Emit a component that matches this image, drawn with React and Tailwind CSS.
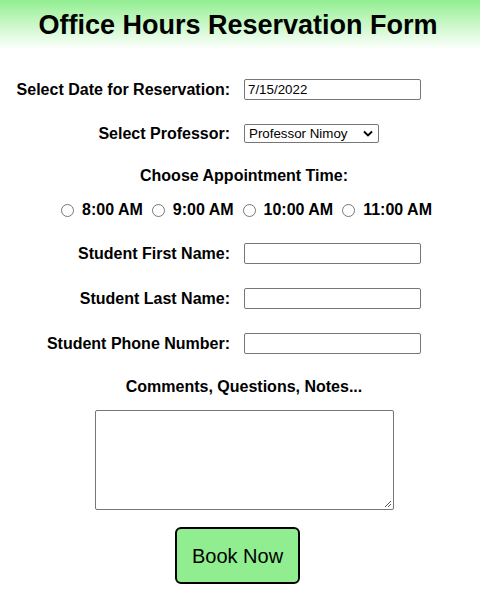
import React from "react";

const font = { fontFamily: '"Liberation Sans", Arial, sans-serif' };

function Input({ value }) {
  return (
    <div className="w-[177px] h-[21px] border border-[#767676] rounded-[2px] bg-white flex items-center pl-[3px] text-[13.33px] text-black">
      {value}
    </div>
  );
}

function Radio({ label }) {
  return (
    <div className="flex items-center">
      <div className="w-[13px] h-[13px] rounded-full border border-[#767676] bg-white mr-[8px]" />
      <span className="font-bold text-[16px]">{label}</span>
    </div>
  );
}

function Row({ label, children, className }) {
  return (
    <div className={"grid grid-cols-[230px_1fr] gap-[14px] items-center " + (className || "")}>
      <div className="text-right font-bold text-[16px] leading-[18px]">{label}</div>
      <div className="flex">{children}</div>
    </div>
  );
}

export default function App() {
  return (
    <div className="w-[480px] h-[595px] bg-white text-black" style={font}>
      <div className="h-[50px] bg-gradient-to-b from-[#90ee90] to-white flex items-center justify-center pr-[4px]">
        <h1 className="font-bold text-[27px] leading-none mt-[1px]">Office Hours Reservation Form</h1>
      </div>
      <Row label="Select Date for Reservation:" className="mt-[29px] h-[21px]">
        <Input value="7/15/2022" />
      </Row>
      <Row label="Select Professor:" className="mt-[24px] h-[19px]">
        <div className="w-[135px] h-[19px] border border-[#767676] rounded-[2px] flex items-center justify-between pl-[4px] pr-[5px] text-[13.33px]">
          <span>Professor Nimoy</span>
          <svg width="10" height="7" viewBox="0 0 10 7"><path d="M1 1.5 L5 5.5 L9 1.5" fill="none" stroke="black" strokeWidth="1.8" /></svg>
        </div>
      </Row>
      <div className="mt-[24px] h-[18px] leading-[18px] text-center font-bold text-[16px] ml-[8px]">Choose Appointment Time:</div>
      <div className="mt-[16px] h-[18px] flex items-center justify-start pl-[61px] gap-[9px]">
        <Radio label="8:00 AM" />
        <Radio label="9:00 AM" />
        <Radio label="10:00 AM" />
        <Radio label="11:00 AM" />
      </div>
      <Row label="Student First Name:" className="mt-[24px] h-[21px]">
        <Input value="" />
      </Row>
      <Row label="Student Last Name:" className="mt-[24px] h-[21px]">
        <Input value="" />
      </Row>
      <Row label="Student Phone Number:" className="mt-[24px] h-[21px]">
        <Input value="" />
      </Row>
      <div className="mt-[24px] h-[18px] leading-[18px] text-center font-bold text-[16px] ml-[8px]">Comments, Questions, Notes...</div>
      <div className="mt-[14px] flex justify-center ml-[9px]">
        <div className="relative w-[299px] h-[100px] border border-[#767676] rounded-[2px]">
          <svg className="absolute right-[1px] bottom-[1px]" width="9" height="9" viewBox="0 0 9 9">
            <path d="M8 2 L2 8 M8 5 L5 8" stroke="#555" strokeWidth="1" />
          </svg>
        </div>
      </div>
      <div className="mt-[17px] flex justify-center ml-[-5px]">
        <div className="w-[125px] h-[57px] bg-[#90ee90] border-2 border-black rounded-[6px] flex items-center justify-center text-[20px]">
          Book Now
        </div>
      </div>
    </div>
  );
}
